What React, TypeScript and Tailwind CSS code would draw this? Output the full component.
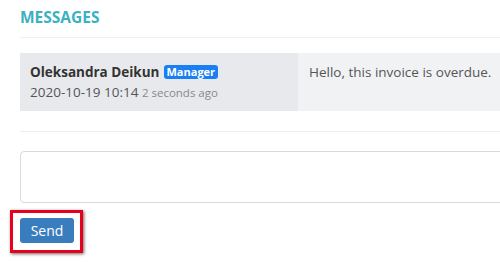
export default function App() {
  return (
    <div
      className="w-[500px] h-[262px] overflow-hidden bg-white"
      style={{ fontFamily: '"Open Sans", "Liberation Sans", sans-serif' }}
    >
      <div className="w-[560px] pl-5">
        <h2 className="pt-[6px] pb-[9px] text-[15.5px] leading-[22px] font-bold text-[#3bb1c2] border-b border-[#f0f0f0]">
          MESSAGES
        </h2>

        <div className="mt-[15px] flex h-[58px]">
          <div className="w-[278px] bg-[#e8e9ed] pl-[10px] pt-[9px]">
            <div className="flex items-center text-[13.5px] leading-[20px]">
              <span className="font-bold text-[#333]">Oleksandra Deikun</span>
              <span className="ml-[4px] h-[14px] rounded-[3px] bg-[#1a7ff2] px-[3px] text-[11px] leading-[14px] font-bold text-white">
                Manager
              </span>
            </div>
            <div className="text-[13.5px] leading-[20px] text-[#555]">
              2020-10-19 10:14{" "}
              <span className="text-[11.5px] text-[#888]">2 seconds ago</span>
            </div>
          </div>
          <div className="flex-1 bg-[#f1f2f4] pl-[11px] pt-[9px] text-[13.5px] leading-[20px] text-[#555]">
            Hello, this invoice is overdue.
          </div>
        </div>

        <div className="mt-[20px] border-t border-[#eeeeee]" />

        <textarea className="mt-[19px] block w-full h-[52px] rounded-[4px] border border-[#d9d9d9] resize-none" />

        <div className="relative mt-[15px] inline-block">
          <div className="absolute -left-[10px] -top-[8px] -right-[9px] -bottom-[10px] border-[3px] border-[#e8001c] shadow-[1px_1px_3px_rgba(0,0,0,0.6)]" />
          <button className="relative block w-[54px] h-[25px] rounded-[3px] bg-[#3a7dbf] text-[14px] leading-[25px] text-white">
            Send
          </button>
        </div>
      </div>
    </div>
  );
}
